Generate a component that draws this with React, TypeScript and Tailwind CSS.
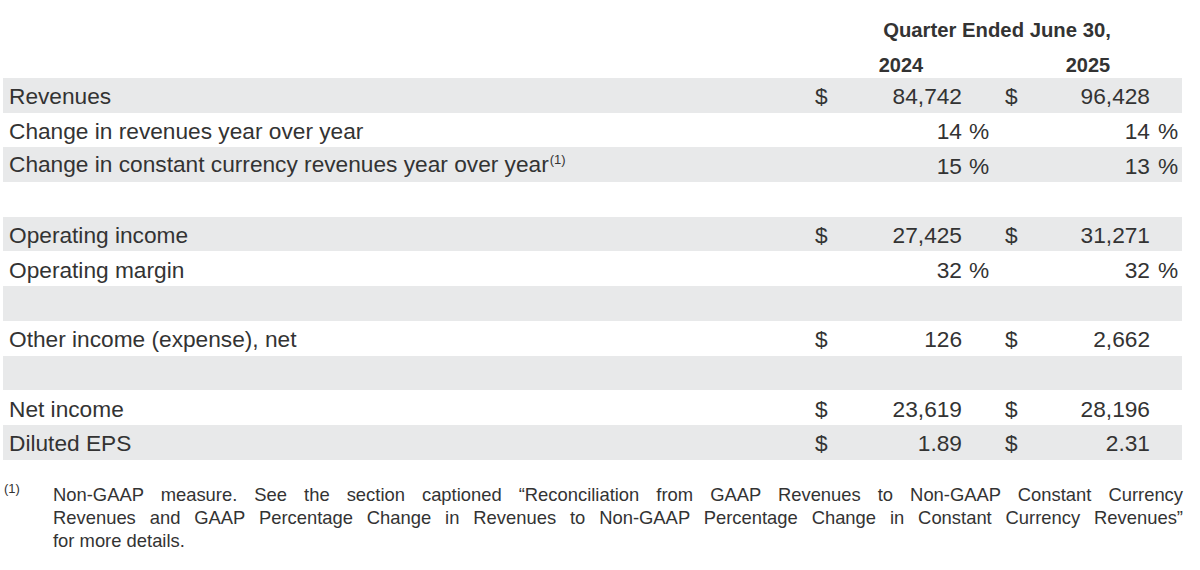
type Row = {
  label?: string;
  note?: boolean;
  shaded: boolean;
  a?: string;
  b?: string;
  dollar?: boolean;
  pct?: boolean;
};

const rows: Row[] = [
  { label: "Revenues", shaded: true, a: "84,742", b: "96,428", dollar: true },
  { label: "Change in revenues year over year", shaded: false, a: "14", b: "14", pct: true },
  { label: "Change in constant currency revenues year over year", note: true, shaded: true, a: "15", b: "13", pct: true },
  { shaded: false },
  { label: "Operating income", shaded: true, a: "27,425", b: "31,271", dollar: true },
  { label: "Operating margin", shaded: false, a: "32", b: "32", pct: true },
  { shaded: true },
  { label: "Other income (expense), net", shaded: false, a: "126", b: "2,662", dollar: true },
  { shaded: true },
  { label: "Net income", shaded: false, a: "23,619", b: "28,196", dollar: true },
  { label: "Diluted EPS", shaded: true, a: "1.89", b: "2.31", dollar: true },
];

const cols = "grid grid-cols-[809px_50px_100px_28px_50px_110px_32px]";

const TableRow = ({ row }: { row: Row }) => (
  <div className={`${cols} h-[34.7px] pt-[2px] items-center ${row.shaded ? "bg-[#e8e9ea]" : ""}`}>
    <div className="pl-[6px] whitespace-nowrap">
      {row.label}
      {row.note && <span className="text-[13px] ml-[1px] relative -top-[8px]">(1)</span>}
    </div>
    <div className="pl-[3px]">{row.dollar ? "$" : ""}</div>
    <div className="text-right">{row.a}</div>
    <div className="pl-[7px]">{row.pct ? "%" : ""}</div>
    <div className="pl-[15px]">{row.dollar ? "$" : ""}</div>
    <div className="text-right">{row.b}</div>
    <div className="pl-[8px]">{row.pct ? "%" : ""}</div>
  </div>
);

export default function App() {
  return (
    <div className="w-[1200px] h-[570px] bg-white text-[#333333] font-['Liberation_Sans',Arial,sans-serif] overflow-hidden">
      <div className="ml-[3px] w-[1179px]">
        <div className={`${cols} pt-[18px] text-[20.3px] leading-[24px] font-bold`}>
          <div />
          <div className="col-span-6 text-center">Quarter Ended June 30,</div>
        </div>
        <div className={`${cols} mt-[11px] mb-[1px] text-[20px] leading-[24px] font-bold`}>
          <div />
          <div className="col-span-3 text-center">2024</div>
          <div className="col-span-3 text-center pl-[4px]">2025</div>
        </div>
        <div className="text-[22.7px] leading-[26px]">
          {rows.map((r, i) => (
            <TableRow key={i} row={r} />
          ))}
        </div>
      </div>

      <div className="mt-[23px] flex text-[18.4px] leading-[23px]">
        <div className="w-[53px] pl-[4px]">
          <span className="text-[13px] relative -top-[8px]">(1)</span>
        </div>
        <div className="w-[1130px] text-justify">
          <div className="[text-align-last:justify]">
            Non-GAAP measure. See the section captioned “Reconciliation from GAAP Revenues to Non-GAAP Constant Currency
          </div>
          <div className="[text-align-last:justify]">
            Revenues and GAAP Percentage Change in Revenues to Non-GAAP Percentage Change in Constant Currency Revenues”
          </div>
          <div>for more details.</div>
        </div>
      </div>
    </div>
  );
}
